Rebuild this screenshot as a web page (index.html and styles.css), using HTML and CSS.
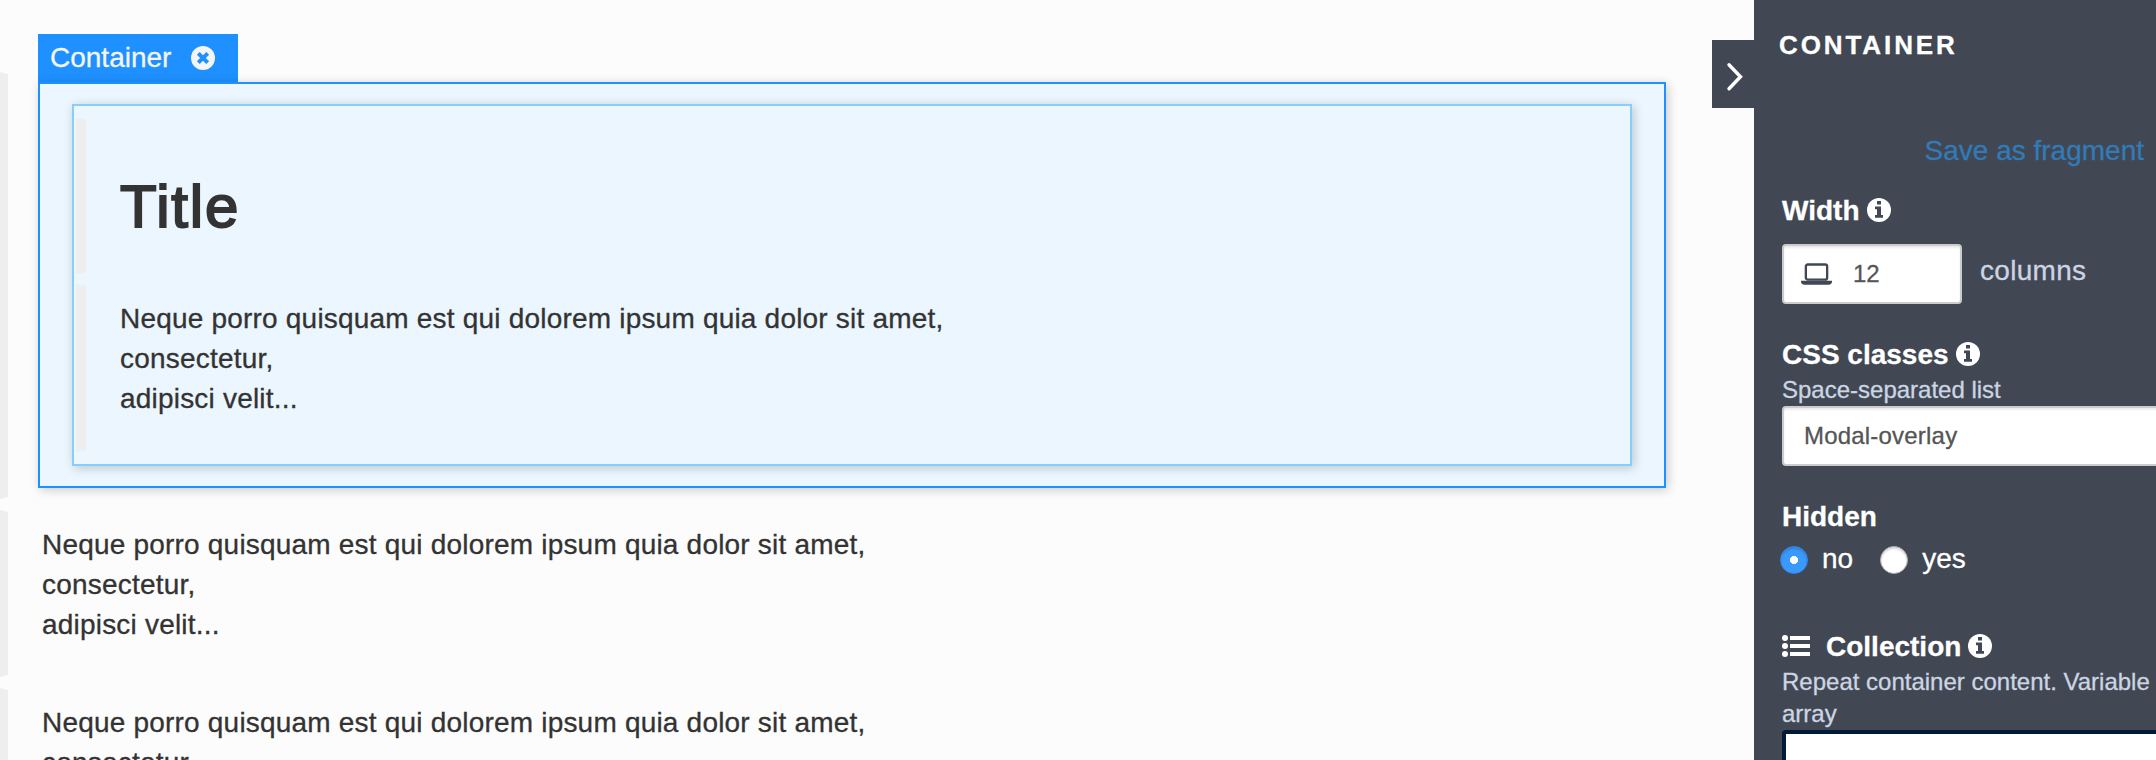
FILE: index.html
```
<!DOCTYPE html>
<html lang="en">
<head>
<meta charset="utf-8">
<title>Page editor</title>
<link rel="stylesheet" href="styles.css">
</head>
<body>
<svg class="defs" width="0" height="0">
  <symbol id="info" viewBox="0 0 24 24">
    <circle cx="12" cy="12" r="12" fill="#fff"/>
    <path fill="#414853" d="M10 3h4v3.400h-4zM8 8.400h6v8.600h2v2.800H8V17h2v-5.800H8z"/>
  </symbol>
</svg>
<div class="editor">
  <main class="canvas">
    <div class="rail">
      <div class="bar bar-first"></div>
      <div class="bar bar-second"></div>
      <div class="bar bar-third"></div>
    </div>
    <div class="page">
      <div class="tag">
        <span>Container</span>
        <svg class="tag-close" viewBox="0 0 24 24"><circle cx="12" cy="12" r="12" fill="#f5f5f5"/><path d="M7.300 7.300l9.400 9.400M16.700 7.300l-9.400 9.400" stroke="#1e90ff" stroke-width="4"/></svg>
      </div>
      <section class="selected">
        <div class="inner">
          <div class="item item-title">
            <div class="bar"></div>
            <h1 class="title">Title</h1>
          </div>
          <div class="item item-text">
            <div class="bar"></div>
            <p class="text">Neque porro quisquam est qui dolorem ipsum quia dolor sit amet,<br>consectetur,<br>adipisci velit...</p>
          </div>
        </div>
      </section>
      <p class="text para">Neque porro quisquam est qui dolorem ipsum quia dolor sit amet,<br>consectetur,<br>adipisci velit...</p>
      <p class="text para para-next">Neque porro quisquam est qui dolorem ipsum quia dolor sit amet,<br>consectetur,</p>
    </div>
    <div class="toggle">
      <svg width="42" height="68" viewBox="0 0 42 68"><path d="M17 24.800l11.500 12-11.500 12" fill="none" stroke="#fff" stroke-width="3.400" stroke-linecap="round"/></svg>
    </div>
  </main>
  <aside class="sidebar">
    <h2 class="heading">CONTAINER</h2>
    <a class="save">Save as fragment</a>
    <div class="label label-width"><span>Width</span><svg class="info"><use href="#info"/></svg></div>
    <div class="width-row">
      <div class="input input-width">
        <svg class="laptop" viewBox="0 0 32 22"><rect x="5" y="1.200" width="22" height="15.600" rx="2" fill="none" stroke="#414853" stroke-width="2.400"/><path d="M0 18h32v1c0 1.800-1.500 3-3.500 3h-25C1.500 22 0 20.800 0 19z" fill="#414853"/></svg>
        <span>12</span>
      </div>
      <span class="unit">columns</span>
    </div>
    <div class="label label-css"><span>CSS classes</span><svg class="info"><use href="#info"/></svg></div>
    <div class="hint">Space-separated list</div>
    <div class="input input-css">Modal-overlay</div>
    <div class="label label-hidden"><span>Hidden</span></div>
    <div class="radios">
      <span class="radio radio-on"></span><span class="radio-label">no</span>
      <span class="radio"></span><span class="radio-label">yes</span>
    </div>
    <div class="label label-collection">
      <svg class="list" viewBox="0 0 28 22" fill="#fff"><circle cx="3" cy="3" r="3"/><circle cx="3" cy="11" r="3"/><circle cx="3" cy="19" r="3"/><path d="M8 1h20v4H8zM8 9h20v4H8zM8 17h20v4H8z"/></svg>
      <span>Collection</span><svg class="info"><use href="#info"/></svg>
    </div>
    <div class="hint hint-collection">Repeat container content. Variable c<br>array</div>
    <div class="collection-input"></div>
  </aside>
</div>
</body>
</html>
```

FILE: styles.css
```
* { box-sizing: border-box; }
body {
  margin: 0;
  font-family: "Liberation Sans", Arial, sans-serif;
  font-size: 28px;
  line-height: 40px;
  color: #333;
  -webkit-text-stroke: .3px currentColor;
}
h1, h2, p { margin: 0; }
svg { display: block; flex: none; }
.defs { position: absolute; }
.editor { display: flex; width: 2156px; height: 760px; overflow: hidden; background: #fcfcfc; }
.canvas { display: flex; width: 1754px; height: 760px; overflow: hidden; }

.rail { display: flex; flex-direction: column; gap: 11px; width: 8px; padding-top: 72px; }
.bar { flex: none; background: #eee; clip-path: polygon(0 0, 100% 2px, 100% calc(100% - 2px), 0 100%); }
.bar-first { height: 427px; }
.bar-second { height: 167px; }
.bar-third { height: 167px; }

.page { width: 1628px; margin-left: 30px; padding-top: 34px; flex: none; }
.tag {
  display: flex;
  align-items: center;
  width: 200px;
  height: 48px;
  padding-left: 12px;
  gap: 20px;
  color: #f5f5f5;
  background: #1e90ff;
}
.tag-close { width: 24px; height: 24px; }
.selected {
  height: 406px;
  padding: 20px 32px;
  background: #ebf6ff;
  border: 2px solid #1e90ff;
  box-shadow: 2px 2px 10px rgba(0, 0, 0, .2);
}
.inner {
  width: 1560px;
  height: 362px;
  padding: 12px 2px;
  display: flex;
  flex-direction: column;
  gap: 10px;
  background: #ebf6ff;
  border: 2px solid #87cefa;
  box-shadow: 2px 2px 10px rgba(0, 0, 0, .2);
}
.item { display: flex; gap: 34px; }
.item .bar { width: 10px; }
.item-title { height: 156px; }
.item-text { height: 168px; }
.title {
  padding-top: 55px;
  font-size: 60px;
  line-height: 68px;
  font-weight: 400;
  letter-spacing: 1.800px;
  -webkit-text-stroke: 2px #333;
}
.item-text .text { padding-top: 15px; }
.text { white-space: nowrap; letter-spacing: .2px; }
.para { padding: 37px 0 0 4px; }
.para-next { padding-top: 58px; }

.toggle { align-self: flex-start; width: 42px; height: 68px; margin: 40px 0 0 auto; background: #414853; }

.sidebar {
  width: 402px;
  height: 760px;
  padding: 27px 0 0 28px;
  overflow: hidden;
  color: #fff;
  background: #414853;
}
.heading { margin-left: -3px; font-size: 26px; line-height: 36px; letter-spacing: 2.900px; }
.save { display: block; margin-top: 68px; padding-right: 12px; text-align: right; color: #337ab7; }
.label { display: flex; align-items: center; height: 40px; gap: 7px; font-weight: 700; }
.label span { padding-top: 1px; }
.info { width: 24px; height: 24px; }
.label-width { margin-top: 19px; }
.width-row { display: flex; margin-top: 14px; gap: 18px; height: 60px; }
.input {
  height: 60px;
  font-size: 24px;
  line-height: 56px;
  color: #555;
  background: #fff;
  border: 2px solid #ccc;
  border-radius: 4px;
  box-shadow: inset 0 2px 2px rgba(0, 0, 0, .075);
}
.input-width { display: flex; align-items: center; gap: 21px; width: 180px; padding-left: 17px; }
.laptop { width: 31px; height: 22px; }
.unit { padding-top: 7px; letter-spacing: .3px; color: #ccd5e3; }
.label-css { margin-top: 30px; }
.hint { font-size: 24px; line-height: 32px; white-space: nowrap; color: #ccd5e3; }
.input-css { width: 400px; padding-left: 20px; letter-spacing: .2px; }
.label-hidden { margin-top: 30px; }
.radios { display: flex; height: 40px; margin: 2px 0 0 -2px; }
.radio {
  width: 28px;
  height: 28px;
  margin-top: 8px;
  border-radius: 50%;
  background: #fff;
  border: 1px solid #aaa;
  box-shadow: inset 0 2px 2px rgba(0, 0, 0, .15);
}
.radio-on { border-color: #2d87f0; background: radial-gradient(circle, #fff 3.800px, #3b99fc 4.300px); }
.radio-label { margin-left: 14px; padding-top: 1px; }
.radio-label + .radio { margin-left: 27px; }
.label-collection { margin-top: 48px; }
.list { width: 28px; height: 22px; margin-right: 9px; }
.collection-input {
  width: 400px;
  height: 60px;
  border: 4px solid #001a38;
  border-radius: 4px;
  background: #fff;
}
```
